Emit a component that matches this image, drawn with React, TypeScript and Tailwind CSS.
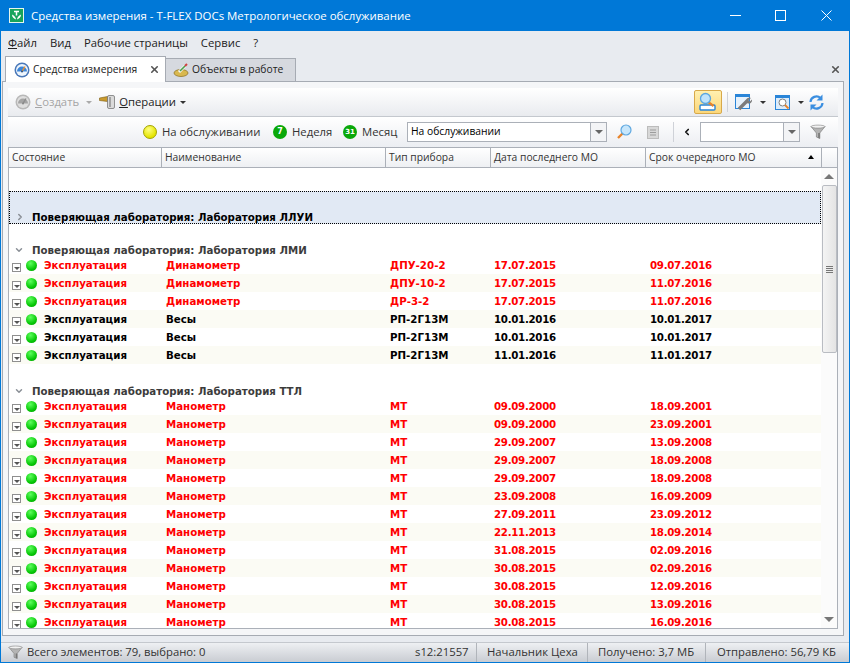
import { ChevronDown, ChevronRight, X } from "lucide-react"

const segoe = "font-['Open_Sans',sans-serif] text-[11.3px]"
const tahoma = "font-['Open_Sans',sans-serif] text-[10.3px]"

const columns = [
  { label: "Состояние", width: "w-[153px]" },
  { label: "Наименование", width: "w-[224px]" },
  { label: "Тип прибора", width: "w-[105px]" },
  { label: "Дата последнего МО", width: "w-[155px]" },
  { label: "Срок очередного МО", width: "w-[176px]" },
]

const lmi = [
  ["Динамометр", "ДПУ-20-2", "17.07.2015", "09.07.2016", 1],
  ["Динамометр", "ДПУ-10-2", "17.07.2015", "11.07.2016", 1],
  ["Динамометр", "ДР-3-2", "17.07.2015", "11.07.2016", 1],
  ["Весы", "РП-2Г13М", "10.01.2016", "10.01.2017", 0],
  ["Весы", "РП-2Г13М", "10.01.2016", "10.01.2017", 0],
  ["Весы", "РП-2Г13М", "11.01.2016", "11.01.2017", 0],
] as const

const ttl = [
  ["09.09.2000", "18.09.2001"],
  ["09.09.2000", "23.09.2001"],
  ["29.09.2007", "13.09.2008"],
  ["29.09.2007", "18.09.2008"],
  ["29.09.2007", "18.09.2008"],
  ["23.09.2008", "16.09.2009"],
  ["27.09.2011", "23.09.2012"],
  ["22.11.2013", "18.09.2014"],
  ["31.08.2015", "02.09.2016"],
  ["30.08.2015", "02.09.2016"],
  ["30.08.2015", "12.09.2016"],
  ["30.08.2015", "13.09.2016"],
  ["30.08.2015", "16.09.2016"],
]

function Row({ name, type, last, next, red, tint }: { name: string; type: string; last: string; next: string; red: boolean; tint: boolean }) {
  return (
    <div className={`flex h-[18px] shrink-0 items-center pt-[1px] font-bold ${red ? "text-[#ff0000]" : "text-black"} ${tint ? "bg-[#fbfbf4]" : "bg-white"}`}>
      <div className="flex w-[153px] items-center pl-[3px]">
        <span className="mt-[3px] flex h-[9px] w-[9px] items-end justify-center border border-[#8f8f8f] bg-white pb-[1px]">
          <span className="h-0 w-0 border-x-[3px] border-t-[3px] border-x-transparent border-t-[#555]" />
        </span>
        <span className="ml-[5px] h-[11px] w-[11px] rounded-full bg-[radial-gradient(circle_at_40%_30%,#5dff5d,#08c808_60%,#009a00)]" />
        <span className="ml-[7px]">Эксплуатация</span>
      </div>
      <div className="w-[224px] pl-[4px]">{name}</div>
      <div className="w-[104px] pl-[4px]">{type}</div>
      <div className="w-[156px] pl-[4px] tracking-[-0.3px]">{last}</div>
      <div className="pl-[4px] tracking-[-0.3px]">{next}</div>
    </div>
  )
}

function GroupHeader({ title, height }: { title: string; height: string }) {
  return (
    <div className={`flex shrink-0 items-end pl-[5px] font-bold leading-[12px] text-[#3c3c3c] ${height}`}>
      <ChevronDown className="mb-[1px] h-[10px] w-[10px] text-[#8a8f96]" strokeWidth={3.5} />
      <span className="ml-[8px]">{title}</span>
    </div>
  )
}

function Caret({ color = "border-t-[#333]" }: { color?: string }) {
  return <span className={`block h-0 w-0 border-x-[3px] border-t-[3px] border-x-transparent ${color}`} />
}

function Gauge({ gray }: { gray?: boolean }) {
  return (
    <svg width="16" height="16" viewBox="0 0 16 16">
      <circle cx="8" cy="8" r="7.5" fill={gray ? "#b8b8b8" : "#4a78b8"} />
      <circle cx="8" cy="8" r="6" fill={gray ? "#dedede" : "#eef5fc"} />
      <path d="M3 9.5a5 5 0 0 1 10 0z" fill={gray ? "#a4a4a4" : "#3d86d8"} />
      <path d="M8 9.5l3-5" stroke={gray ? "#8c8c8c" : "#f0902a"} strokeWidth="1.4" />
      <circle cx="8" cy="9.5" r="1" fill={gray ? "#888" : "#2a4f80"} />
    </svg>
  )
}

function Combo({ width, value }: { width: string; value?: string }) {
  return (
    <div className={`flex h-[20px] shrink-0 items-center border border-[#abb0b8] bg-white ${width}`}>
      <span className={`flex-1 pl-[3px] text-black ${tahoma}`}>{value}</span>
      <span className="flex h-full w-[16px] items-center justify-center border-l border-[#abb0b8] bg-[#f3f4f6]">
        <span className="h-0 w-0 border-x-[4px] border-t-[4px] border-x-transparent border-t-[#666]" />
      </span>
    </div>
  )
}

function Funnel({ size = 16 }: { size?: number }) {
  return (
    <svg width={size} height={size} viewBox="0 0 16 16">
      <path d="M1 2.5h14L9.8 9v5.5L6.4 13V9z" fill="#b4b4b4" stroke="#808080" strokeWidth="0.7" />
      <path d="M9.8 9v5.5l-1.6-.8V9z" fill="#777" />
      <ellipse cx="8" cy="2.6" rx="7" ry="1.5" fill="#f2f2f2" stroke="#808080" strokeWidth="0.6" />
    </svg>
  )
}

export default function App() {
  return (
    <div className={`flex h-[663px] w-[850px] flex-col overflow-hidden border-x border-b border-[#0078d7] bg-[#e8ebf0] text-[#333] ${segoe}`}>
      {/* Title bar */}
      <div className="flex h-[31px] shrink-0 items-center bg-[#0078d7] text-white">
        <svg className="ml-[8px]" width="15" height="15" viewBox="0 0 15 15">
          <rect x="0.5" y="0.5" width="14" height="14" fill="#17a45c" stroke="#e6f6ec" />
          <path d="M5 3.5h5M7.5 3.5v4" stroke="#fff" strokeWidth="1.5" fill="none" />
          <path d="M3 6.5c0 3 2 4 4 5-0.2-2-1.5-4-4-5zM12 6.5c0 3-2 4-4 5 0.2-2 1.5-4 4-5z" fill="#fff" />
        </svg>
        <span className="ml-[7px] text-[11.45px]">Средства измерения - T-FLEX DOCs Метрологическое обслуживание</span>
        <div className="ml-auto flex items-center">
          <svg className="mr-[34px]" width="11" height="11" viewBox="0 0 11 11"><path d="M0 5.5h11" stroke="#fff" /></svg>
          <svg className="mr-[35px]" width="11" height="11" viewBox="0 0 11 11"><rect x="0.5" y="0.5" width="10" height="10" fill="none" stroke="#fff" /></svg>
          <svg className="mr-[17px]" width="11" height="11" viewBox="0 0 11 11"><path d="M0.5 0.5l10 10M10.5 0.5l-10 10" stroke="#fff" /></svg>
        </div>
      </div>

      {/* Menu */}
      <div className="flex h-[25px] shrink-0 items-center gap-[13px] pl-[7px] text-[#222]">
        <span><span className="underline">Ф</span>айл</span>
        <span>Вид</span>
        <span>Рабочие страницы</span>
        <span>Сервис</span>
        <span>?</span>
      </div>

      {/* Tabs */}
      <div className={`relative z-10 -mb-px flex h-[26px] shrink-0 items-start pl-[4px] ${tahoma}`}>
        <div className="flex h-[26px] w-[161px] items-center whitespace-nowrap border-x border-t border-[#a6abb3] bg-white pl-[8px] text-[#222]">
          <Gauge />
          <span className="ml-[3px]">Средства измерения</span>
          <X className="ml-auto mr-[5px] h-[11px] w-[11px] text-[#555]" strokeWidth={3.5} />
        </div>
        <div className="mt-[2px] flex h-[23px] w-[130px] items-center whitespace-nowrap border-r border-t border-[#a6abb3] bg-[#d6d9df] pl-[7px] text-[#222]">
          <svg width="17" height="16" viewBox="0 0 17 16">
            <ellipse cx="8" cy="11" rx="7" ry="3.5" fill="#d9b84e" stroke="#8a6d1c" strokeWidth="0.7" />
            <path d="M6 10l6-6" stroke="#f4f4f4" strokeWidth="3" />
            <path d="M7 9l5-5" stroke="#4aa04a" strokeWidth="1.6" />
            <path d="M12 4l2-2" stroke="#d04040" strokeWidth="2" />
          </svg>
          <span className="ml-[2px]">Объекты в работе</span>
        </div>
        <X className="ml-auto mr-[8px] mt-[8px] h-[11px] w-[11px] text-[#555]" strokeWidth={3.5} />
      </div>

      {/* Panel */}
      <div className="mb-[6px] ml-[1px] mr-[5px] flex min-h-0 flex-1 flex-col border border-[#a6abb3] bg-[#f5f6f8] px-[5px] pb-[6px] pt-[6px]">
        {/* Toolbar 1 */}
        <div className="flex h-[29px] shrink-0 items-center border-b border-[#c4c8ce] bg-gradient-to-b from-white to-[#e9ebef] pl-[7px]">
          <Gauge gray />
          <span className="ml-[4px] text-[#a5a5a5]"><span className="underline">С</span>оздать</span>
          <span className="ml-[7px]"><Caret color="border-t-[#aaa]" /></span>
          <svg className="ml-[7px]" width="17" height="16" viewBox="0 0 17 16">
            <path d="M0.5 4l8-1.5v5l-8-1z" fill="#c99a2e" stroke="#7a5c12" strokeWidth="0.6" />
            <rect x="8.5" y="1.5" width="7" height="13" rx="1.5" fill="#dadada" stroke="#6a6a6a" strokeWidth="0.7" />
            <path d="M11 3v10" stroke="#8a8a8a" strokeWidth="1.4" />
          </svg>
          <span className="ml-[3px] mr-[4px] text-[#222]"><span className="underline">О</span>перации</span>
          <Caret />
          <div className="ml-auto flex items-center pr-[14px]">
            <span className="flex h-[24px] w-[28px] items-center justify-center rounded-[2px] border border-[#d8a94a] bg-gradient-to-b from-[#fff0b0] to-[#fcd77a]">
              <svg width="20" height="20" viewBox="0 0 20 20">
                <rect x="2" y="13" width="15" height="5" rx="1" fill="#fff" stroke="#2a85d8" strokeWidth="1.4" />
                <path d="M9.5 9.5l6 4.5" stroke="#e8832a" strokeWidth="2.2" />
                <circle cx="7.5" cy="6.5" r="5" fill="#bfe3fb" stroke="#5aa6e0" strokeWidth="1.3" />
              </svg>
            </span>
            <span className="ml-[5px] mr-[7px] h-[20px] w-px bg-[#cfd2d8]" />
            <svg width="18" height="18" viewBox="0 0 18 18">
              <rect x="0.5" y="1.5" width="14" height="14" fill="#e6f1fb" stroke="#2a85d8" />
              <rect x="0.5" y="1.5" width="14" height="2.5" fill="#2a85d8" />
              <path d="M4 16l8-8" stroke="#7b7b7b" strokeWidth="3.4" />
              <path d="M11 9c-1-3 2-5 5-4l-2.5 2 1.5 1.5 2-2c.6 3-2 5-5 3.5z" fill="#7b7b7b" />
            </svg>
            <span className="ml-[7px] mr-[9px]"><Caret /></span>
            <svg width="17" height="17" viewBox="0 0 17 17">
              <rect x="0.5" y="1.5" width="14" height="14" fill="#dcecfb" stroke="#2a85d8" />
              <rect x="0.5" y="1.5" width="14" height="2.5" fill="#2a85d8" />
              <circle cx="7.5" cy="8.5" r="3.5" fill="#fff" stroke="#808080" />
              <path d="M10 11l3.5 3.5" stroke="#e8832a" strokeWidth="1.8" />
            </svg>
            <span className="ml-[6px] mr-[5px]"><Caret /></span>
            <svg width="15" height="17" viewBox="0 0 15 17" fill="none" stroke="#3a8ee0" strokeWidth="2.2">
              <path d="M1.5 8a6 6 0 0 1 10-4" />
              <path d="M13.5 9a6 6 0 0 1-10 4" />
              <path d="M13.5 0.5v6h-6z" fill="#3a8ee0" stroke="none" />
              <path d="M1.5 16.5v-6h6z" fill="#3a8ee0" stroke="none" />
            </svg>
          </div>
        </div>

        {/* Toolbar 2 */}
        <div className="flex h-[30px] shrink-0 items-center bg-gradient-to-b from-white to-[#eceef2] pl-[135px]">
          <span className="h-[14px] w-[14px] rounded-full border border-[#a3a300] bg-[radial-gradient(circle_at_40%_30%,#ffff80,#e4e400_70%)]" />
          <span className="ml-[5px] w-[100px] whitespace-nowrap">На обслуживании</span>
          <span className="ml-[11px] flex h-[14px] w-[14px] items-center justify-center rounded-full bg-[#0aa80a] font-['DejaVu_Sans',sans-serif] text-[8px] font-bold text-white">7</span>
          <span className="ml-[5px] w-[40px]">Неделя</span>
          <span className="ml-[11px] flex h-[14px] w-[14px] items-center justify-center rounded-full bg-[#0aa80a] font-['DejaVu_Sans',sans-serif] text-[7px] font-bold text-white">31</span>
          <span className="ml-[5px] w-[36px]">Месяц</span>
          <Combo width="w-[200px] ml-[9px]" value="На обслуживании" />
          <svg className="ml-[9px]" width="16" height="16" viewBox="0 0 16 16">
            <path d="M7 9l-5 5" stroke="#e8832a" strokeWidth="2.4" />
            <circle cx="10" cy="6" r="5" fill="#c7e6fb" stroke="#5fa8e0" strokeWidth="1.2" />
          </svg>
          <svg className="ml-[15px]" width="12" height="13" viewBox="0 0 12 13">
            <rect x="0.5" y="0.5" width="11" height="12" fill="#d8d8d8" stroke="#bcbcbc" />
            <path d="M3 4h6M3 6.5h6M3 9h6" stroke="#9c9c9c" />
          </svg>
          <span className="ml-[14px] h-[20px] w-px bg-[#cfd2d8]" />
          <ChevronRight className="ml-[8px] h-[10px] w-[10px] rotate-180 text-[#111]" strokeWidth={4} />
          <Combo width="w-[100px] ml-[8px]" />
          <span className="ml-[10px] flex"><Funnel /></span>
        </div>

        {/* Grid */}
        <div className={`flex min-h-0 flex-1 flex-col overflow-hidden border border-[#abb0b8] bg-white ${tahoma}`}>
          <div className="flex h-[20px] shrink-0 border-b border-[#abb0b8] bg-gradient-to-b from-white to-[#eef0f3]">
            {columns.map((c, i) => (
              <div key={c.label} className={`relative flex items-center border-r border-[#abb0b8] pl-[3px] text-[#333] ${c.width}`}>
                {c.label}
                {i === 4 && <span className="absolute right-[7px] top-[7px] h-0 w-0 border-x-[3px] border-b-[4px] border-x-transparent border-b-black" />}
              </div>
            ))}
          </div>
          <div className="flex min-h-0 flex-1 font-['DejaVu_Sans',sans-serif] text-[10.25px]">
            <div className="flex min-w-0 flex-1 flex-col overflow-hidden">
              <div className="h-[23px] shrink-0" />
              <div className="flex h-[33px] shrink-0 items-end border border-dotted border-black bg-[#e1e9f4] pl-[5px] font-bold leading-[12px] text-black">
                <ChevronRight className="mb-[1px] h-[10px] w-[10px] text-[#8a8f96]" strokeWidth={3.5} />
                <span className="ml-[7px]">Поверяющая лаборатория: Лаборатория ЛЛУИ</span>
              </div>
              <GroupHeader height="h-[32px]" title="Поверяющая лаборатория: Лаборатория ЛМИ" />
              {lmi.map((r, i) => (
                <Row key={i} name={r[0]} type={r[1]} last={r[2]} next={r[3]} red={r[4] === 1} tint={i % 2 === 1} />
              ))}
              <GroupHeader height="h-[33px]" title="Поверяющая лаборатория: Лаборатория ТТЛ" />
              {ttl.map((r, i) => (
                <Row key={i} name="Манометр" type="МТ" last={r[0]} next={r[1]} red tint={i % 2 === 1} />
              ))}
            </div>
            {/* Scrollbar */}
            <div className="flex w-[16px] shrink-0 flex-col items-center bg-[#fbfbfb]">
              <span className="mt-[6px] h-0 w-0 shrink-0 border-x-[5px] border-b-[5px] border-x-transparent border-b-[#777]" />
              <div className="mt-[6px] flex h-[168px] w-[15px] shrink-0 flex-col items-center justify-center gap-[1px] rounded-[2px] border border-[#b9bcc2] bg-gradient-to-r from-[#f4f4f4] to-[#e4e4e4]">
                <span className="h-px w-[7px] bg-[#777]" />
                <span className="h-px w-[7px] bg-[#777]" />
                <span className="h-px w-[7px] bg-[#777]" />
                <span className="h-px w-[7px] bg-[#777]" />
              </div>
              <span className="mb-[6px] mt-auto h-0 w-0 shrink-0 border-x-[5px] border-t-[5px] border-x-transparent border-t-[#777]" />
            </div>
          </div>
        </div>
      </div>

      {/* Status bar */}
      <div className="flex h-[20px] shrink-0 items-center border-t border-[#c4c8ce] bg-gradient-to-b from-[#eef0f3] to-[#c9ccd2] pl-[7px]">
        <Funnel size={15} />
        <span className="ml-[4px]">Всего элементов: 79, выбрано: 0</span>
        <div className="ml-auto flex h-full items-center">
          <span className="flex h-full w-[61px] items-center">s12:21557</span>
          <span className="flex h-full w-[111px] items-center border-l border-[#b0b4ba] pl-[10px]">Начальник Цеха</span>
          <span className="flex h-full w-[118px] items-center border-l border-[#b0b4ba] pl-[10px]">Получено: 3,7 МБ</span>
          <span className="flex h-full w-[144px] items-center border-l border-[#b0b4ba] pl-[11px]">Отправлено: 56,79 КБ</span>
        </div>
      </div>
    </div>
  )
}
